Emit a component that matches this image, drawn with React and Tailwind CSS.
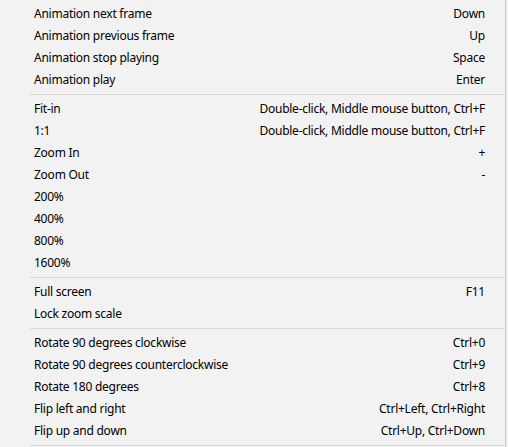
import React from 'react';

const groups = [
  [
    ['Animation next frame', 'Down'],
    ['Animation previous frame', 'Up'],
    ['Animation stop playing', 'Space'],
    ['Animation play', 'Enter'],
  ],
  [
    ['Fit-in', 'Double-click, Middle mouse button, Ctrl+F'],
    ['1:1', 'Double-click, Middle mouse button, Ctrl+F'],
    ['Zoom In', '+'],
    ['Zoom Out', '-'],
    ['200%', ''],
    ['400%', ''],
    ['800%', ''],
    ['1600%', ''],
  ],
  [
    ['Full screen', 'F11'],
    ['Lock zoom scale', ''],
  ],
  [
    ['Rotate 90 degrees clockwise', 'Ctrl+0'],
    ['Rotate 90 degrees counterclockwise', 'Ctrl+9'],
    ['Rotate 180 degrees', 'Ctrl+8'],
    ['Flip left and right', 'Ctrl+Left, Ctrl+Right'],
    ['Flip up and down', 'Ctrl+Up, Ctrl+Down'],
  ],
];

const MenuRow = ({ label, shortcut }) => (
  <div className="h-[22px] flex items-center justify-between pl-[34px] pr-[20px]">
    <span>{label}</span>
    <span>{shortcut}</span>
  </div>
);

export default function App() {
  return (
    <div className="w-[508px] h-[447px] overflow-hidden bg-[#f2f2f2] flex">
      <div
        className="w-[506px] border-r border-[#cccccc] pt-[3px] text-[12px] tracking-[-0.25px] text-black"
        style={{ fontFamily: '"Noto Sans", "Segoe UI", sans-serif' }}
      >
        {groups.map((rows, i) => (
          <div key={i}>
            {rows.map(([label, shortcut]) => (
              <MenuRow key={label} label={label} shortcut={shortcut} />
            ))}
            <div className="h-[7px] pt-[3px] pl-[30px] pr-[1px]">
              <div className="h-px bg-[#d7d7d7]" />
            </div>
          </div>
        ))}
      </div>
      <div className="flex-1 bg-[#f0f0f0]" />
    </div>
  );
}
